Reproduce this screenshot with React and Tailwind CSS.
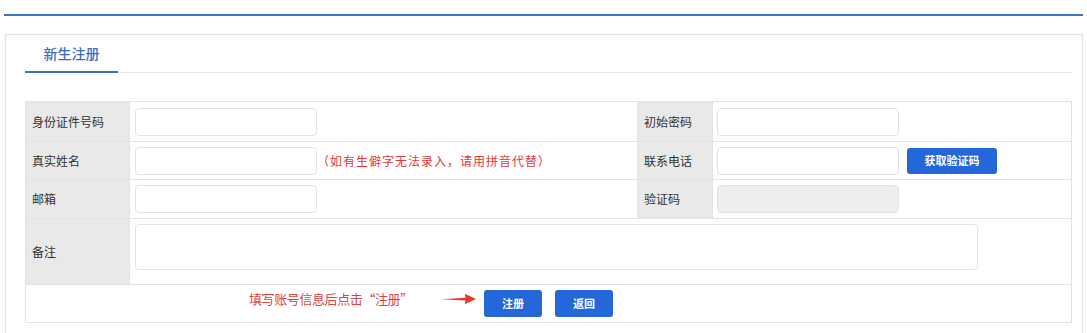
import { useState } from 'react'

const FONT = { fontFamily: '"Noto Sans CJK SC", "Noto Sans", sans-serif' }

const Label = ({ children }) => (
  <td className="bg-[#e9e9e9] pl-[6px] text-[12px] text-[#333] border border-[#e3e3e3] align-middle">
    {children}
  </td>
)

const TextInput = ({ disabled }) => (
  <input
    type="text"
    disabled={disabled}
    className={
      'w-[182px] h-[28px] rounded-[4px] border border-[#e2e2e2] px-2 text-[12px] outline-none ' +
      (disabled ? 'bg-[#eeeeee]' : 'bg-white')
    }
  />
)

const Arrow = () => (
  <svg width="36" height="12" viewBox="0 0 38 12">
    <path d="M0 6.3 L26 4.6 L25 0.5 L37 6 L25 11.5 L26 7.6 Z" fill="#e8352e" />
  </svg>
)

export default function App() {
  const [form, setForm] = useState({})

  return (
    <div className="w-[1087px] h-[333px] bg-white overflow-hidden" style={FONT}>
      <div className="mt-[14px] mx-[4px] h-[2px] bg-[#3c74c9]" />

      <div className="mt-[18px] ml-[5px] mr-[4px] border border-[#e4e4e4] h-[320px] shadow-[0_0_3px_rgba(0,0,0,0.06)]">
        <div className="ml-[19px] mr-[10px] border-b border-[#e6e6e6] flex">
          <div className="w-[93px] h-[38px] -mb-px border-b-2 border-[#3c6fc1] flex items-center justify-center text-[14px] font-medium text-[#3b6cc0]">
            新生注册
          </div>
        </div>

        <table className="ml-[19px] mt-[28px] w-[1047px] border-collapse table-fixed">
          <colgroup>
            <col className="w-[104px]" />
            <col className="w-[508px]" />
            <col className="w-[75px]" />
            <col />
          </colgroup>
          <tbody>
            <tr className="h-[40px]">
              <Label>身份证件号码</Label>
              <td className="border border-[#e3e3e3] pl-[5px]">
                <TextInput />
              </td>
              <Label>初始密码</Label>
              <td className="border border-[#e3e3e3] pl-[4px]">
                <TextInput />
              </td>
            </tr>
            <tr className="h-[38px]">
              <Label>真实姓名</Label>
              <td className="border border-[#e3e3e3] pl-[5px]">
                <div className="flex items-center">
                  <TextInput />
                  <span className="text-[12px] text-[#e0393c] tracking-[1px]">（如有生僻字无法录入，请用拼音代替）</span>
                </div>
              </td>
              <Label>联系电话</Label>
              <td className="border border-[#e3e3e3] pl-[4px]">
                <div className="flex items-center gap-[8px]">
                  <TextInput />
                  <button className="w-[90px] h-[26px] rounded-[3px] bg-[#2467d9] text-white text-[11px] font-bold">
                    获取验证码
                  </button>
                </div>
              </td>
            </tr>
            <tr className="h-[39px]">
              <Label>邮箱</Label>
              <td className="border border-[#e3e3e3] pl-[5px]">
                <TextInput />
              </td>
              <Label>验证码</Label>
              <td className="border border-[#e3e3e3] pl-[4px]">
                <TextInput disabled />
              </td>
            </tr>
            <tr className="h-[66px]">
              <Label>备注</Label>
              <td colSpan={3} className="border border-[#e3e3e3] pl-[5px] pt-[5px] align-top">
                <textarea
                  value={form.note || ''}
                  onChange={(e) => setForm({ ...form, note: e.target.value })}
                  className="block w-[843px] h-[46px] rounded-[4px] border border-[#e2e2e2] resize-none outline-none"
                />
              </td>
            </tr>
            <tr className="h-[38px]">
              <td colSpan={4} className="border border-[#e3e3e3]">
                <div className="relative flex items-center justify-center gap-[13px]">
                  <div className="absolute left-[223px] top-[-1px] flex items-center gap-[28px]">
                    <span className="text-[13px] text-[#d8443f] tracking-[-0.4px]">填写账号信息后点击“注册”</span>
                    <Arrow />
                  </div>
                  <button className="w-[58px] h-[27px] rounded-[3px] bg-[#2467d9] text-white text-[11px] font-bold">
                    注册
                  </button>
                  <button className="w-[58px] h-[27px] rounded-[3px] bg-[#2467d9] text-white text-[11px] font-bold">
                    返回
                  </button>
                </div>
              </td>
            </tr>
          </tbody>
        </table>
      </div>
    </div>
  )
}
